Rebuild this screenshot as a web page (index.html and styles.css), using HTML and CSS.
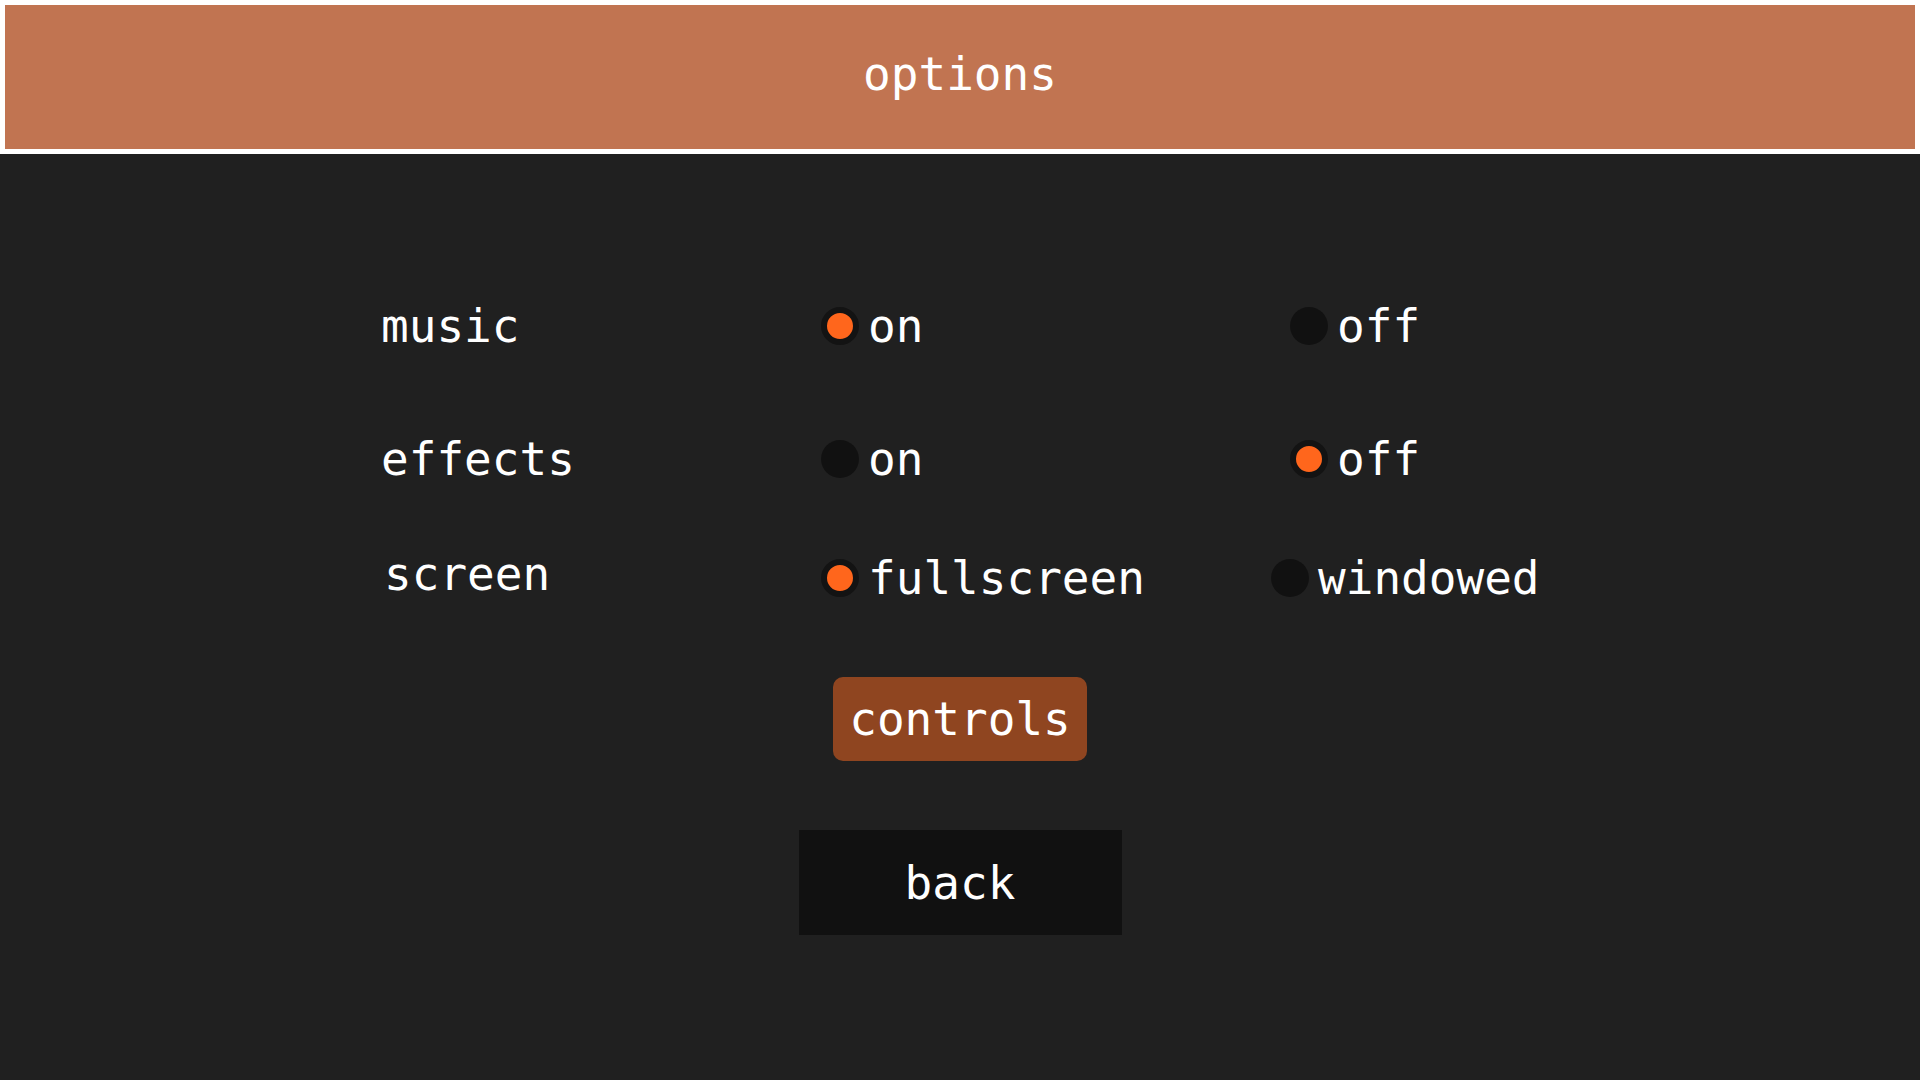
FILE: index.html
```html
<!DOCTYPE html>
<html lang="en">
<head>
<meta charset="utf-8">
<title>options</title>
<link rel="stylesheet" href="styles.css">
</head>
<body>
<header class="title-bar"><h1 class="title">options</h1></header>
<main class="menu">
  <section class="settings">
    <div class="row row--music">
      <span class="label">music</span>
      <label class="choice choice--first"><span class="radio radio--on"></span><span class="choice-text">on</span></label>
      <label class="choice"><span class="radio"></span><span class="choice-text">off</span></label>
    </div>
    <div class="row row--effects">
      <span class="label">effects</span>
      <label class="choice choice--first"><span class="radio"></span><span class="choice-text">on</span></label>
      <label class="choice"><span class="radio radio--on"></span><span class="choice-text">off</span></label>
    </div>
    <div class="row row--screen">
      <span class="label label--screen">screen</span>
      <label class="choice choice--first choice--wide"><span class="radio radio--on"></span><span class="choice-text">fullscreen</span></label>
      <label class="choice"><span class="radio"></span><span class="choice-text">windowed</span></label>
    </div>
  </section>
  <button class="btn btn--controls">controls</button>
  <button class="btn btn--back">back</button>
</main>
</body>
</html>
```

FILE: styles.css
```css
html, body {
  margin: 0;
  padding: 0;
}
body {
  background: #202020;
  color: #ffffff;
  font-family: "DejaVu Sans Mono", "Liberation Mono", monospace;
  font-size: 46px;
  width: 1920px;
  height: 1080px;
  overflow: hidden;
}
.title-bar {
  box-sizing: border-box;
  height: 154px;
  border: 5px solid #ffffff;
  background: #c17451;
  display: flex;
  align-items: center;
  justify-content: center;
  padding-bottom: 6px;
}
.title {
  margin: 0;
  font-size: 46px;
  font-weight: normal;
}
.menu {
  display: flex;
  flex-direction: column;
  align-items: center;
  padding-top: 142px;
}
.settings {
  align-self: stretch;
  display: flex;
  flex-direction: column;
  padding-left: 379px;
}
.row {
  display: flex;
  align-items: center;
  height: 60px;
}
.row--effects {
  margin-top: 73px;
}
.row--screen {
  margin-top: 59px;
}
.label {
  width: 440px;
  margin-left: 2px;
}
.label--screen {
  width: 437px;
  margin-left: 5px;
  margin-bottom: 9px;
}
.choice {
  display: flex;
  align-items: center;
  gap: 9px;
}
.choice--first {
  width: 469px;
}
.choice--wide {
  width: 450px;
}
.radio {
  box-sizing: border-box;
  width: 38px;
  height: 38px;
  border-radius: 50%;
  background: #111111;
  flex: none;
}
.radio--on {
  border: 6px solid #131313;
  background: #ff661c;
}
.btn {
  font-family: inherit;
  font-size: 46px;
  color: #ffffff;
  border: none;
  line-height: normal;
  cursor: pointer;
}
.btn--controls {
  margin-top: 69px;
  background: #8f4520;
  border-radius: 10px;
  width: 254px;
  height: 84px;
  padding: 0;
}
.btn--back {
  margin-top: 69px;
  background: #111111;
  width: 323px;
  height: 105px;
  padding: 0;
}
```
